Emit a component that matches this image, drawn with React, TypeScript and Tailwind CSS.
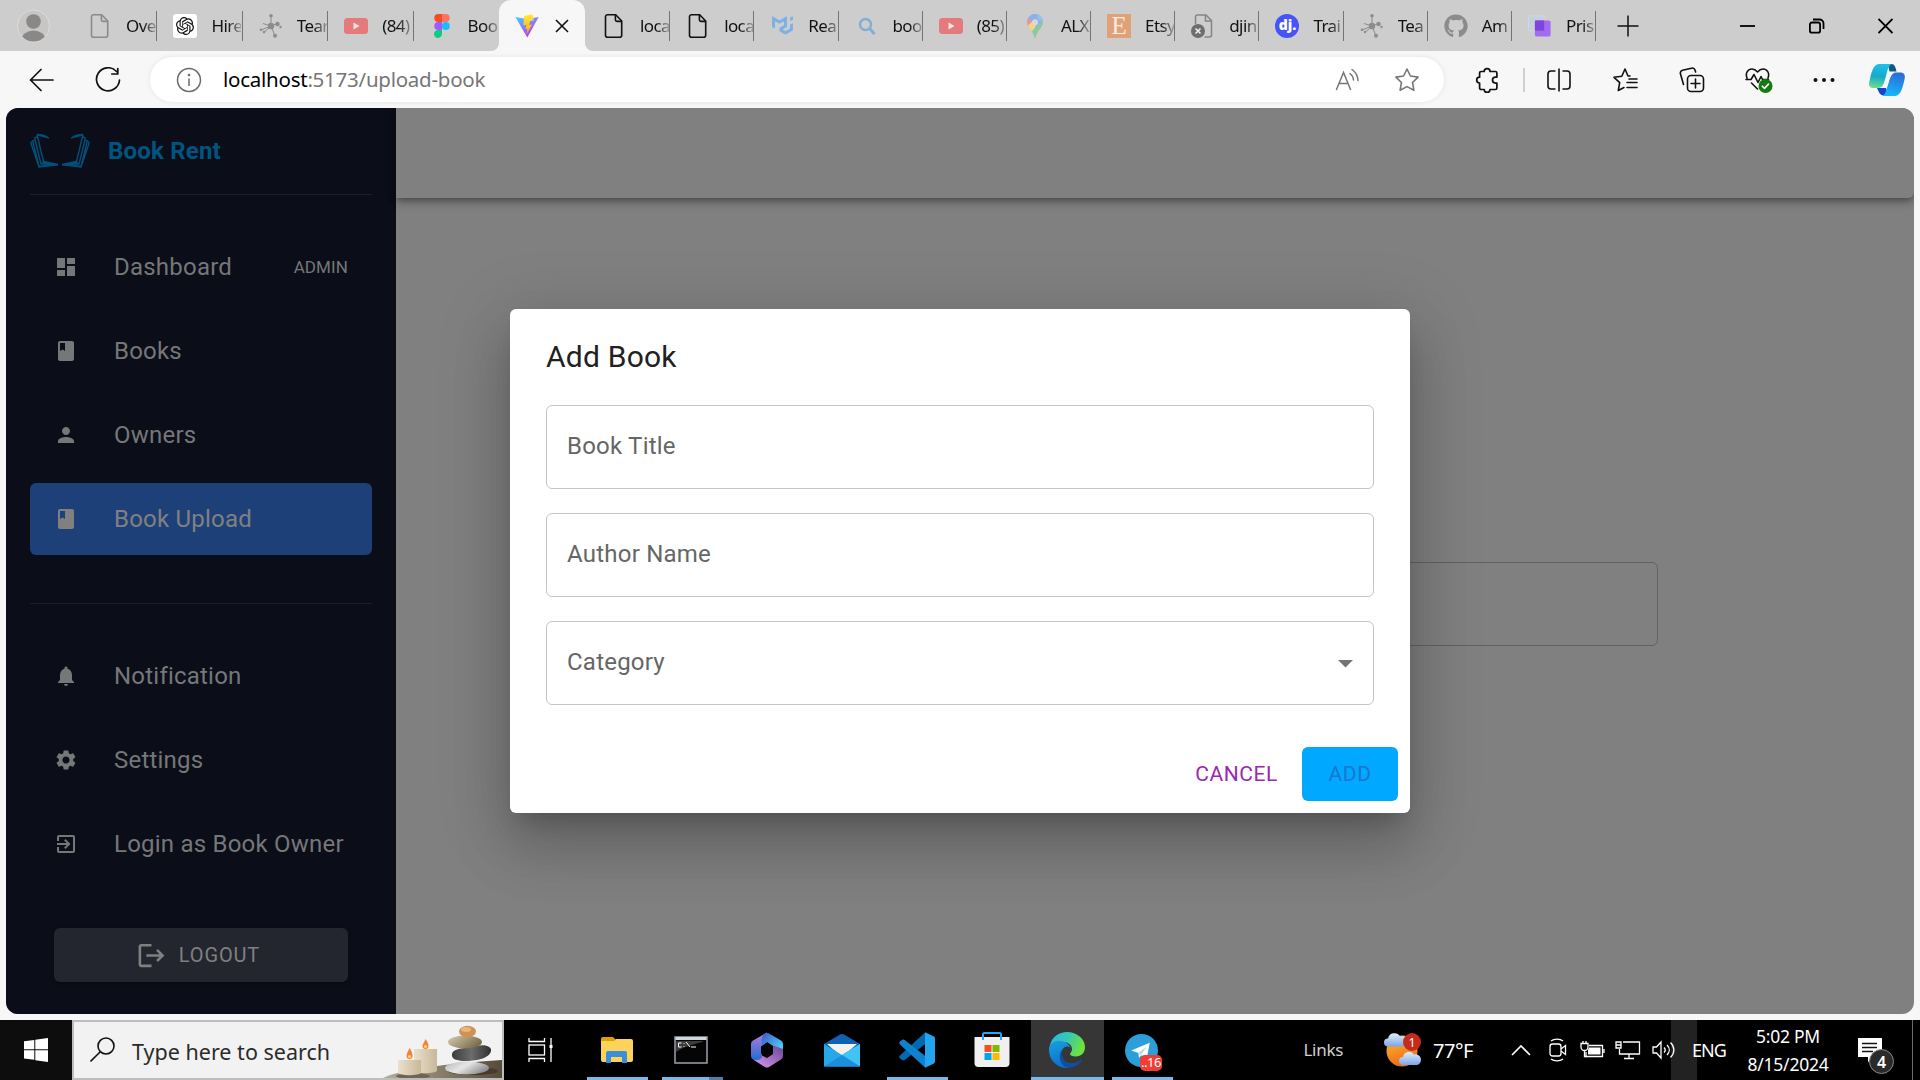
import React from "react";
import {
  MdDashboard,
  MdClass,
  MdPerson,
  MdNotifications,
  MdSettings,
  MdExitToApp,
  MdLogout,
} from "react-icons/md";
import { SiOpenai, SiMui } from "react-icons/si";
import { FaGithub } from "react-icons/fa";

/* ---------- tab icons ---------- */

const FileIcon = ({ color }: { color: string }) => (
  <svg width="24" height="24" viewBox="0 0 24 24" fill="none" stroke={color} strokeWidth="1.6" strokeLinejoin="round">
    <path d="M5.5 0.8h8.2l6 6.2v14.2a2 2 0 0 1-2 2H5.5a2 2 0 0 1-2-2V2.8a2 2 0 0 1 2-2z" />
    <path d="M13.4 0.8v5a1.6 1.6 0 0 0 1.6 1.6h4.7" />
  </svg>
);

const HubIcon = () => (
  <svg width="24" height="24" viewBox="0 0 24 24" stroke="#8c8c8c" fill="#8c8c8c">
    <path d="M12 12V2M12 12l6.500-2.500M12 12l4 10M12 12l-6 5.500M12 12l-10 4M12 12L4 9.500" strokeWidth="1" />
    <g stroke="none">
      <circle cx="12" cy="12" r="3.200" />
      <circle cx="12" cy="1.800" r="1.800" />
      <circle cx="18.500" cy="10" r="2.200" />
      <circle cx="21.500" cy="13" r="1.200" />
      <circle cx="16" cy="21.800" r="2" />
      <circle cx="5" cy="18" r="1.200" />
      <circle cx="2" cy="15.800" r="1.300" />
    </g>
  </svg>
);

const VideoIcon = () => (
  <svg width="24" height="24" viewBox="0 0 24 24">
    <rect x="0" y="4" width="24" height="16" rx="3.5" fill="#e47a7c" />
    <path d="M9.500 8.500v7l6-3.500z" fill="#f7e3e3" />
  </svg>
);

const FigmaIcon = () => (
  <svg width="24" height="24" viewBox="0 0 24 24">
    <path d="M8.300 0H12v8H8.300a4 4 0 0 1 0-8z" fill="#f24e1e" />
    <path d="M12 0h3.700a4 4 0 0 1 0 8H12z" fill="#ff7262" />
    <path d="M8.300 8H12v8H8.300a4 4 0 0 1 0-8z" fill="#a259ff" />
    <circle cx="15.800" cy="12" r="4" fill="#1abcfe" />
    <path d="M8.300 16H12v4a4 4 0 1 1-3.700-4z" fill="#0acf83" />
  </svg>
);

const ViteIcon = () => (
  <svg width="24" height="24" viewBox="0 0 24 24">
    <defs>
      <linearGradient id="vite-a" x1="0" y1="0" x2="0.6" y2="1">
        <stop offset="0" stopColor="#41d1ff" />
        <stop offset="1" stopColor="#bd34fe" />
      </linearGradient>
      <linearGradient id="vite-b" x1="0" y1="0" x2="0" y2="1">
        <stop offset="0" stopColor="#ffea3f" />
        <stop offset="1" stopColor="#ffa800" />
      </linearGradient>
    </defs>
    <path d="M0.300 3L12 5l11.700-2L12.300 23.500z" fill="url(#vite-a)" />
    <path d="M17.500 0.300L9 2l-.600 9.500 3-.700-.900 4.500 2-.600-1.200 6L17 10.500l-3 .600 1.200-4 3.600-.700z" fill="url(#vite-b)" />
  </svg>
);

const SearchFavicon = () => (
  <svg width="24" height="24" viewBox="0 0 24 24" fill="none" stroke="#82aed2" strokeWidth="2.4">
    <circle cx="10.500" cy="10.500" r="5.500" />
    <path d="M14.500 14.500l5 5.500" strokeWidth="3" />
  </svg>
);

const PinIcon = () => (
  <svg width="24" height="24" viewBox="0 0 24 24">
    <defs>
      <clipPath id="pin">
        <path d="M12 0a8 8 0 0 1 8 8.200c0 5.800-6.300 8.300-7.300 15a.7.700 0 0 1-1.400 0C10.300 16.500 4 14 4 8.200A8 8 0 0 1 12 0z" />
      </clipPath>
    </defs>
    <g clipPath="url(#pin)">
      <rect width="24" height="24" fill="#8dc8a0" />
      <path d="M2 0h20v4L12 14z" fill="#8bb0ea" />
      <path d="M2 2l8 6-8 10z" fill="#e79a93" />
      <path d="M2 14L10 7l3 5-6 8z" fill="#f3d583" />
      <path d="M14 0l8 3v4l-7-1z" fill="#9dbdf0" />
    </g>
    <circle cx="12" cy="8.200" r="3" fill="#d8d8d8" />
  </svg>
);

const EtsyIcon = () => (
  <span className="flex size-6 items-center justify-center bg-[#e0a177] font-['Liberation_Serif',serif] text-[25px] leading-none text-[#f1ebe6]">
    E
  </span>
);

const BrokenFileIcon = () => (
  <svg width="24" height="24" viewBox="0 0 24 24" fill="none">
    <path d="M4.500 10V3a2 2 0 0 1 2-2h8.500l5.500 5.500V21a2 2 0 0 1-2 2h-5" stroke="#858585" strokeWidth="1.500" />
    <path d="M14.500 1v6h6" stroke="#858585" strokeWidth="1.500" />
    <circle cx="7" cy="17" r="7" fill="#6e6e6e" />
    <path d="M4.500 14.500l5 5m0-5l-5 5" stroke="#eee" strokeWidth="1.600" />
  </svg>
);

const DjIcon = () => (
  <span className="flex size-6 items-center justify-center rounded-full bg-[#4553f8] pb-0.5 font-['Open_Sans',sans-serif] text-[14px] leading-none font-extrabold text-white">
    dj.
  </span>
);

const PrismIcon = () => (
  <svg width="26" height="24" viewBox="0 0 26 24">
    <rect x="0.500" y="1" width="17" height="16" rx="1" fill="#c6d0dc" stroke="#d9e0e8" strokeDasharray="1.500 1" />
    <rect x="7.500" y="6" width="17" height="17.500" rx="2" fill="#a26bf2" />
    <rect x="7.500" y="6" width="10" height="11" fill="#8044dc" />
  </svg>
);

const GptIcon = () => (
  <span className="flex size-6 items-center justify-center rounded-[3px] bg-white">
    <SiOpenai size={18} color="#111" />
  </span>
);

type TabInfo = { icon: React.ReactNode; text: string };

const leftTabs: TabInfo[] = [
  { icon: <FileIcon color="#8a8a8a" />, text: "Ove" },
  { icon: <GptIcon />, text: "Hire" },
  { icon: <HubIcon />, text: "Tear" },
  { icon: <VideoIcon />, text: "(84)" },
  { icon: <FigmaIcon />, text: "Boo" },
];

const rightTabs: TabInfo[] = [
  { icon: <FileIcon color="#111" />, text: "loca" },
  { icon: <FileIcon color="#111" />, text: "loca" },
  { icon: <SiMui size={21} color="#7db1e6" />, text: "Rea" },
  { icon: <SearchFavicon />, text: "boo" },
  { icon: <VideoIcon />, text: "(85)" },
  { icon: <PinIcon />, text: "ALX" },
  { icon: <EtsyIcon />, text: "Etsy" },
  { icon: <BrokenFileIcon />, text: "djin" },
  { icon: <DjIcon />, text: "Trai" },
  { icon: <HubIcon />, text: "Tea" },
  { icon: <FaGithub size={24} color="#8a8b8d" />, text: "Am" },
  { icon: <PrismIcon />, text: "Pris" },
];

const TabContent = ({ icon, text, separator }: TabInfo & { separator: boolean }) => (
  <>
    <span className="flex w-[24px] shrink-0 items-center justify-center">{icon}</span>
    <span className="ml-[14px] w-[30px] overflow-hidden text-[17px] tracking-[-0.6px] whitespace-nowrap text-[#111] [mask-image:linear-gradient(to_right,black_55%,rgba(0,0,0,0.25)_100%)]">
      {text}
    </span>
    {separator && <span className="ml-auto h-[30px] w-px shrink-0 bg-[#747474]" />}
  </>
);

const TabBar = () => (
  <div className="flex h-[51px] items-center bg-[#cdcdcd]">
    <div className="flex w-[72px] shrink-0 pl-[17px]">
      <svg width="33" height="34" viewBox="0 0 33 34">
        <defs>
          <clipPath id="avatar">
            <circle cx="16.500" cy="17" r="15.500" />
          </clipPath>
        </defs>
        <circle cx="16.500" cy="17" r="16" fill="#c8c6c4" stroke="#dedcda" />
        <g fill="#8a8886" clipPath="url(#avatar)">
          <circle cx="16.500" cy="12.500" r="7.300" />
          <ellipse cx="16.500" cy="31" rx="12" ry="9.500" />
        </g>
      </svg>
    </div>
    {leftTabs.map((t, i) => (
      <div key={i} className="flex h-full w-[85.4px] shrink-0 items-center pl-4">
        <TabContent {...t} separator={i < 4} />
      </div>
    ))}
    <div className="relative flex h-full w-[86px] shrink-0 items-center rounded-t-[12px] bg-[#f7f7f7] pl-4">
      <svg className="absolute bottom-0 -left-2" width="8" height="8" viewBox="0 0 8 8">
        <path d="M8 0v8H0a8 8 0 0 0 8-8z" fill="#f7f7f7" />
      </svg>
      <svg className="absolute -right-2 bottom-0" width="8" height="8" viewBox="0 0 8 8">
        <path d="M0 0v8h8a8 8 0 0 1-8-8z" fill="#f7f7f7" />
      </svg>
      <ViteIcon />
      <svg className="ml-4" width="14" height="14" viewBox="0 0 14 14" stroke="#111" strokeWidth="1.600">
        <path d="M1 1l12 12M13 1L1 13" />
      </svg>
    </div>
    <div className="ml-px flex h-full shrink-0">
      {rightTabs.map((t, i) => (
        <div key={i} className="flex h-full w-[84.2px] shrink-0 items-center pl-4">
          <TabContent {...t} separator />
        </div>
      ))}
    </div>
    <svg className="mr-[101px] ml-[21px] shrink-0" width="22" height="22" viewBox="0 0 22 22" stroke="#111" strokeWidth="1.500">
      <path d="M11 0.500v21M0.500 11h21" />
    </svg>
    <svg className="mr-[54px] shrink-0" width="15" height="16" viewBox="0 0 15 16" stroke="#000" strokeWidth="1.800">
      <path d="M0 8h15" />
    </svg>
    <svg className="mr-[53px] shrink-0" width="16" height="16" viewBox="0 0 16 16" fill="none" stroke="#000" strokeWidth="1.800">
      <rect x="0.900" y="4.500" width="10.200" height="10.200" rx="2" />
      <path d="M4 1.500h6.500a4 4 0 0 1 4 4V11" />
    </svg>
    <svg className="shrink-0" width="15" height="16" viewBox="0 0 15 16" stroke="#000" strokeWidth="1.800">
      <path d="M0.500 1l14 14M14.500 1L0.500 15" />
    </svg>
  </div>
);

/* ---------- address bar ---------- */

const Toolbar = () => (
  <div className="flex h-[57px] shrink-0 items-center bg-[#f7f7f7]">
    <svg className="ml-[29px] shrink-0" width="25" height="24" viewBox="0 0 25 24" fill="none" stroke="#111" strokeWidth="1.700" strokeLinecap="round" strokeLinejoin="round">
      <path d="M24 12H1.500M12 1.500L1.500 12 12 22.500" />
    </svg>
    <svg className="ml-[41px] shrink-0" width="26" height="26" viewBox="0 0 26 26" fill="none" stroke="#111" strokeWidth="1.700" strokeLinecap="round" strokeLinejoin="round">
      <path d="M21.500 4.500A11.500 11.500 0 1 0 24.500 13M22.800 1.500v5.500h-6" />
    </svg>
    <div className="ml-[29px] flex h-[45px] w-[1294px] shrink-0 items-center rounded-full bg-white pr-[24px] pl-[26px] shadow-[0_0_4px_1px_rgba(0,0,0,0.06)]">
      <svg width="26" height="26" viewBox="0 0 26 26" fill="none" stroke="#6b6b6b" strokeWidth="1.500">
        <circle cx="13" cy="13" r="11.500" />
        <path d="M13 11.500v7.500" />
        <circle cx="13" cy="8" r="0.600" fill="#6b6b6b" />
      </svg>
      <span className="ml-[21px] text-[20.500px] tracking-[-0.250px] whitespace-nowrap text-[#767676]">
        <span className="text-black">localhost</span>:5173/upload-book
      </span>
      <svg className="ml-auto" width="25" height="24" viewBox="0 0 25 24" fill="none" stroke="#767676" strokeWidth="1.500" strokeLinecap="round">
        <path d="M1.500 21.500L8.500 4.500l7 17M4 15.500h9M15 5.500a9 9 0 0 1 3.500 6.500M17 1.500a14 14 0 0 1 6 11" />
      </svg>
      <svg className="ml-[34px]" width="26" height="26" viewBox="0 0 26 26" fill="none" stroke="#767676" strokeWidth="1.600" strokeLinejoin="round">
        <path d="M13 2l3.400 7 7.700 1.100-5.600 5.400 1.400 7.700L13 19.600l-6.900 3.600 1.400-7.700-5.600-5.400L9.600 9z" />
      </svg>
    </div>
    <svg className="ml-[31px] shrink-0" width="24" height="26" viewBox="0 0 24 26" fill="none" stroke="#111" strokeWidth="1.700" strokeLinejoin="round">
      <path d="M9.200 4.500a2.900 2.900 0 0 1 5.800 0h5.300a1.600 1.600 0 0 1 1.600 1.600v4h-1.400a3 3 0 0 0 0 6h1.400v4.800a1.600 1.600 0 0 1-1.600 1.600H15a2.900 2.900 0 0 1-5.800 0h-3a1.600 1.600 0 0 1-1.600-1.600v-4.900a2.900 2.900 0 0 1 0-5.800V6.100a1.600 1.600 0 0 1 1.600-1.600z" />
    </svg>
    <span className="ml-[24px] h-6 w-[2px] shrink-0 bg-[#d0d0d0]" />
    <svg className="ml-[22px] shrink-0" width="24" height="24" viewBox="0 0 24 24" fill="none" stroke="#111" strokeWidth="1.600">
      <path d="M8.500 3H4a3 3 0 0 0-3 3v12a3 3 0 0 0 3 3h4.500M15.500 3H20a3 3 0 0 1 3 3v12a3 3 0 0 1-3 3h-4.500M12 0.500v23" />
    </svg>
    <svg className="ml-[41px] shrink-0" width="26" height="26" viewBox="0 0 26 26" fill="none" stroke="#111" strokeWidth="1.600" strokeLinejoin="round" strokeLinecap="round">
      <path d="M16 9l-3-7-3.200 7.200L2 10.300l5.700 5.400L6.300 23.500 12 20.500M17 12h8M16 9h2M15 15.500h10M15 20.500h10" />
    </svg>
    <svg className="ml-[41px] shrink-0" width="26" height="26" viewBox="0 0 26 26" fill="none" stroke="#111" strokeWidth="1.600" strokeLinecap="round">
      <rect x="8.500" y="8.500" width="16" height="16" rx="3.500" />
      <path d="M16.500 12v9M12 16.500h9M4.500 17.500L1.500 7a3 3 0 0 1 2-3.700L12.500 1.200a3 3 0 0 1 3.600 2l.500 1.800" />
    </svg>
    <svg className="ml-[40px] shrink-0" width="28" height="28" viewBox="0 0 28 28" fill="none" stroke="#111" strokeWidth="1.600" strokeLinecap="round" strokeLinejoin="round">
      <path d="M2 12C0 7 3 3 7 3c2.500 0 4.200 1.500 5.500 3C13.800 4.500 15.500 3 18 3c4 0 7 4 5 9M1 13.500h5l3-5 4 8 3-6 1.500 3h6M6.500 17l6 6" />
      <circle cx="20.500" cy="20" r="7" fill="#107c10" stroke="none" />
      <path d="M17.300 20.200l2.200 2.200 4-4.300" stroke="#fff" />
    </svg>
    <svg className="ml-[40px] shrink-0" width="22" height="6" viewBox="0 0 22 6" fill="#111">
      <circle cx="2.500" cy="3" r="2" />
      <circle cx="11" cy="3" r="2" />
      <circle cx="19.500" cy="3" r="2" />
    </svg>
    <svg className="ml-[34px] shrink-0" width="36" height="34" viewBox="0 0 36 34">
      <defs>
        <linearGradient id="cp-a" x1="0.300" y1="0" x2="0.200" y2="1">
          <stop offset="0" stopColor="#1fc0ea" />
          <stop offset="0.500" stopColor="#17a9c9" />
          <stop offset="1" stopColor="#6be08c" />
        </linearGradient>
        <linearGradient id="cp-b" x1="0.700" y1="0" x2="0.500" y2="1">
          <stop offset="0" stopColor="#2a6ad4" />
          <stop offset="1" stopColor="#17b6fb" />
        </linearGradient>
      </defs>
      <path d="M19 1h3.500c3 0 4 3 5 7.500h-7z" fill="#0d5a86" />
      <path d="M8 25h9l2 7.500h-4c-4 0-5-3-7-7.500z" fill="#1744cf" />
      <path d="M10 1h13c-3.500 1-4.500 6-6 12-2 7.500-3 12-8 12H4c-4 0-4.500-3-3.500-7C2 11 4 1 10 1z" fill="url(#cp-a)" />
      <path d="M26 33H13c3.500-1 4.500-6 6-12 2-7.500 3-11.500 8-11.500h4.500c4 0 5 3 4 7C34 23 32 33 26 33z" fill="url(#cp-b)" />
      <path d="M22 10h3c-3 1.500-4 5-5.500 10-1 3.500-2 5-4 5h-3c2.500-1.500 4-5 5.200-9.500C18.700 12 19.500 10 22 10z" fill="#f4fbff" />
    </svg>
  </div>
);

/* ---------- application page ---------- */

const BookHalf = () => (
  <>
    <path d="M7 1.500l6.500 27 14.500 3M7 1.500l12 3.500M7 1.500c3 0 7 .500 11 3M4.500 5l6.500 26 9-.500M4.500 5l2.500-1M2.500 7.500L9 33.500l11-1.500M0.700 9.500L9 34l12-1.500 7-.800-8-1.200M0.700 9.500L4 7" />
    <path d="M13 28l15 4-16-1z" fill="#00517a" strokeWidth="0.500" />
  </>
);

const BookLogo = () => (
  <svg width="60" height="36" viewBox="0 0 60 36" fill="none" stroke="#00517a" strokeWidth="1.400">
    <BookHalf />
    <g transform="translate(60 0) scale(-1 1)">
      <BookHalf />
    </g>
  </svg>
);

type NavProps = { icon: React.ReactNode; label: string; active?: boolean; tag?: string };

const NavItem = ({ icon, label, active, tag }: NavProps) => (
  <div
    className={
      active
        ? "flex h-[72px] items-center rounded-[6px] bg-[#1e4079] px-6 text-[#808080]"
        : "flex h-[72px] items-center rounded-[6px] px-6 text-[#757779]"
    }
  >
    {icon}
    <span className="ml-9 text-[24px] tracking-[0.220px] whitespace-nowrap">{label}</span>
    {tag && <span className="ml-auto pt-px text-[17px] tracking-[0.100px]">{tag}</span>}
  </div>
);

const Sidebar = () => (
  <aside className="flex w-[390px] shrink-0 flex-col bg-[#0b0d18] px-6">
    <div className="flex h-[87px] shrink-0 items-center border-b border-[#1c1e29] pb-px">
      <BookLogo />
      <span className="ml-[18px] text-[24px] font-bold tracking-[0.200px] text-[#005580]">Book Rent</span>
    </div>
    <nav className="mt-9 flex flex-col gap-3">
      <NavItem icon={<MdDashboard size={24} />} label="Dashboard" tag="ADMIN" />
      <NavItem icon={<MdClass size={24} />} label="Books" />
      <NavItem icon={<MdPerson size={24} />} label="Owners" />
      <NavItem icon={<MdClass size={24} />} label="Book Upload" active />
    </nav>
    <div className="mt-12 h-px shrink-0 bg-[#1c1e29]" />
    <nav className="mt-9 flex flex-col gap-3">
      <NavItem icon={<MdNotifications size={24} />} label="Notification" />
      <NavItem icon={<MdSettings size={24} />} label="Settings" />
      <NavItem icon={<MdExitToApp size={24} />} label="Login as Book Owner" />
    </nav>
    <div className="mx-6 mt-12 flex h-[54px] items-center justify-center rounded-[6px] bg-[#23252f] pr-[6px] text-[#808080] shadow-[0_2px_4px_rgba(0,0,0,0.3)]">
      <MdLogout size={31} />
      <span className="ml-[12px] text-[20px] tracking-[0.850px]">LOGOUT</span>
    </div>
  </aside>
);

const Field = ({ label, select }: { label: string; select?: boolean }) => (
  <div className="flex h-[84px] items-center justify-between rounded-[6px] border border-[#c4c4c4] pr-5 pb-[3px] pl-5">
    <span className="text-[24px] tracking-[0.225px] text-[#666]">{label}</span>
    {select && (
      <svg className="mt-[4px]" width="15" height="8" viewBox="0 0 15 8">
        <path d="M0 0h15L7.500 7.500z" fill="#757575" />
      </svg>
    )}
  </div>
);

const AddBookDialog = () => (
  <div className="h-[504px] w-[900px] rounded-[6px] bg-white px-9 pt-6 shadow-[0_16px_22px_-10px_rgba(0,0,0,0.2),0_36px_57px_4px_rgba(0,0,0,0.14),0_14px_69px_12px_rgba(0,0,0,0.12)]">
    <h2 className="text-[30px] leading-[48px] tracking-[0.225px] text-[#212121]">Add Book</h2>
    <div className="mt-6 flex flex-col gap-6">
      <Field label="Book Title" />
      <Field label="Author Name" />
      <Field label="Category" select />
    </div>
    <div className="-mr-6 mt-[42px] flex h-[54px] items-center justify-end text-[21px] tracking-[0.600px]">
      <button className="px-6 pt-[2px] text-[#9c27b0]">CANCEL</button>
      <button className="h-[54px] w-24 rounded-[6px] bg-[#00a8ff] pt-[2px] text-[#1976d2]">ADD</button>
    </div>
  </div>
);

const AppPage = () => (
  <div className="relative mx-[6px] flex h-[906px] overflow-hidden rounded-[12px] bg-[#808080] font-[Roboto,sans-serif]">
    <Sidebar />
    <main className="flex grow flex-col items-center">
      <header className="h-[90px] w-full shrink-0 rounded-br-[6px] bg-[#808080] shadow-[0_3px_6px_-1px_rgba(0,0,0,0.35),0_6px_8px_0_rgba(0,0,0,0.1),0_2px_15px_0_rgba(0,0,0,0.08)]" />
      <div className="mt-[364px] h-[84px] w-[1006px] rounded-[6px] border border-[#626262]" />
    </main>
    <div className="absolute inset-0 flex items-center justify-center">
      <AddBookDialog />
    </div>
  </div>
);

/* ---------- taskbar ---------- */

const CandleArt = () => (
  <svg className="ml-auto shrink-0" width="119" height="56" viewBox="0 0 119 56">
    <defs>
      <linearGradient id="ca" x1="0" x2="1">
        <stop offset="0" stopColor="#e9e0ce" />
        <stop offset="1" stopColor="#c9b898" />
      </linearGradient>
      <linearGradient id="st1" x1="0" x2="1" y2="0.500">
        <stop offset="0" stopColor="#d8cdb0" />
        <stop offset="1" stopColor="#7c6c4d" />
      </linearGradient>
      <linearGradient id="st2" x1="0" x2="1">
        <stop offset="0" stopColor="#3c3c3c" />
        <stop offset="0.500" stopColor="#6c6c6c" />
        <stop offset="1" stopColor="#303030" />
      </linearGradient>
      <linearGradient id="st3" x1="0" x2="1" y2="0.500">
        <stop offset="0" stopColor="#b5b5b5" />
        <stop offset="0.500" stopColor="#e6e6e6" />
        <stop offset="1" stopColor="#909090" />
      </linearGradient>
      <linearGradient id="tb" x1="0" x2="1">
        <stop offset="0" stopColor="#b5b09a" />
        <stop offset="1" stopColor="#564a38" />
      </linearGradient>
    </defs>
    <path d="M0 56C15 48 60 42 119 38v18z" fill="url(#tb)" />
    <ellipse cx="30" cy="54" rx="17" ry="3" fill="#6d6655" />
    <ellipse cx="90" cy="49" rx="25" ry="4" fill="#453a2b" />
    <path d="M31 27h23v22a12 3 0 0 1-23 0z" fill="url(#ca)" />
    <path d="M15 38h23v13a12 3 0 0 1-23 0z" fill="url(#ca)" />
    <path d="M42.500 17c2 3 3 5 3 7a3 3 0 0 1-6 0c0-2 2-4 3-7z" fill="#f3803c" />
    <circle cx="42.500" cy="24.500" r="1.600" fill="#ffd95a" />
    <path d="M26.500 26c2 3 3 5 3 8a3 3 0 0 1-6 0c0-3 2-5 3-8z" fill="#f3803c" />
    <circle cx="26.500" cy="34.500" r="1.600" fill="#ffd95a" />
    <ellipse cx="84" cy="46" rx="22" ry="6.500" fill="url(#st3)" />
    <path d="M69 32c2-7 14-5 24-8 10-2 16 1 15 5-2 8-16 10-26 10-8 0-14-2-13-7z" fill="url(#st2)" />
    <ellipse cx="82" cy="20" rx="17" ry="6.500" fill="url(#st1)" />
    <ellipse cx="84.500" cy="9.500" rx="8.500" ry="5.700" fill="#cd9254" />
    <ellipse cx="83" cy="7.500" rx="5" ry="2.500" fill="#e6b67d" />
  </svg>
);

const ExplorerIcon = () => (
  <svg width="32" height="28" viewBox="0 0 32 28">
    <path d="M0 3a2 2 0 0 1 2-2h10l3 3v5H0z" fill="#e0a000" />
    <path d="M0 5h13l2-2h15a2 2 0 0 1 2 2v19a2 2 0 0 1-2 2H2a2 2 0 0 1-2-2z" fill="#ffd25c" />
    <path d="M5 27V17a2 2 0 0 1 2-2h17a2 2 0 0 1 2 2v10h-5v-6H10v6z" fill="#3a8fdb" />
  </svg>
);

const TerminalIcon = () => (
  <svg width="34" height="28" viewBox="0 0 34 28">
    <rect x="1" y="1" width="32" height="26" fill="#050505" stroke="#9aa3ab" strokeWidth="1.500" />
    <rect x="1.500" y="1" width="31" height="3" fill="#cfd6dc" />
    <path d="M2 16C10 10 20 9 30 5H2z" fill="#3c3c3c" />
    <path d="M7.500 7H4.500v4h3M10 7v.800M10 10v.800M12 6l4 5M17 11h5" stroke="#fff" strokeWidth="1" fill="none" />
  </svg>
);

const OfficeIcon = () => (
  <svg width="34" height="36" viewBox="0 0 34 36">
    <defs>
      <linearGradient id="of1" x1="0" y1="0" x2="0" y2="1">
        <stop offset="0" stopColor="#b77de0" />
        <stop offset="1" stopColor="#1f6cd0" />
      </linearGradient>
      <linearGradient id="of2" x1="0" x2="1" y2="0.800">
        <stop offset="0" stopColor="#3a5bc8" />
        <stop offset="1" stopColor="#4fd6ff" />
      </linearGradient>
      <linearGradient id="of3" x1="0" x2="1" y1="1" y2="0">
        <stop offset="0" stopColor="#e09cf8" />
        <stop offset="1" stopColor="#67458f" />
      </linearGradient>
    </defs>
    <path d="M17 0.500L3 8.500a4 4 0 0 0-2 3.500v12a4 4 0 0 0 2 3.500c4 2 9 1 9-4V14l5-4z" fill="url(#of1)" />
    <path d="M15 1.500a4 4 0 0 1 4 0l12 7a4 4 0 0 1 2 3.500v11l-10-6v-3l-6-4-5 3c-1-5 0-10 3-11.500z" fill="url(#of2)" />
    <path d="M33 17v7a4 4 0 0 1-2 3.500l-12 7.500a4 4 0 0 1-4 0L3 27.500c4 1.500 9 0 9-4l5 2.500 6-4v-8.500z" fill="url(#of3)" />
    <path d="M17 11l6 3.500v7L17 25l-6-3.500v-7z" fill="#050505" />
  </svg>
);

const MailIcon = () => (
  <svg width="36" height="34" viewBox="0 0 36 34">
    <path d="M0 11L16 1.500a4 4 0 0 1 4 0L36 11v6H0z" fill="#0f5fb5" />
    <path d="M3 11h30L18 24z" fill="#f1f1f1" />
    <path d="M0 11l18 11L36 11v22.500H0z" fill="#28a8ea" />
    <path d="M36 11v22.500L18 22z" fill="#40c4f5" />
    <path d="M0 33.500L18 22l18 11.500z" fill="#1b8fdd" />
  </svg>
);

const CodeIcon = () => (
  <svg width="36" height="36" viewBox="0 0 36 36">
    <path d="M26 0.500L1 23.500c-1 1-1 2 0 3l2 1.500c1 .700 2 .600 2.700 0L30 9z" fill="#0069b2" />
    <path d="M26 35.500L1 12.500c-1-1-1-2 0-3L3 8c1-.700 2-.600 2.700 0L30 27z" fill="#0f82cf" />
    <path d="M26 0.300l8.500 4A2.500 2.500 0 0 1 36 6.500v23a2.500 2.500 0 0 1-1.500 2.200l-8.500 4z" fill="#24a3ee" />
  </svg>
);

const StoreIcon = () => (
  <svg width="36" height="36" viewBox="0 0 36 36">
    <path d="M9 7V2.500A1.500 1.500 0 0 1 10.500 1h15A1.500 1.500 0 0 1 27 2.500V7" fill="none" stroke="#2aa6ea" strokeWidth="2" />
    <path d="M0.500 5h35v26a4 4 0 0 1-4 4h-27a4 4 0 0 1-4-4z" fill="#f0f0f0" />
    <path d="M10.500 13h7v7h-7z" fill="#f25022" />
    <path d="M18.500 13h7v7h-7z" fill="#7fba00" />
    <path d="M10.500 21h7v7h-7z" fill="#00a4ef" />
    <path d="M18.500 21h7v7h-7z" fill="#ffb900" />
    <path d="M9 5v3M27 5v3" stroke="#2aa6ea" strokeWidth="2" />
  </svg>
);

const EdgeIcon = () => (
  <svg width="36" height="36" viewBox="0 0 36 36">
    <defs>
      <linearGradient id="eg1" x1="0" x2="1" y2="0.300">
        <stop offset="0" stopColor="#2bb5e8" />
        <stop offset="0.500" stopColor="#33c6b8" />
        <stop offset="1" stopColor="#6be33e" />
      </linearGradient>
      <linearGradient id="eg2" x1="0" y1="0" x2="0.300" y2="1">
        <stop offset="0" stopColor="#1aa0e0" />
        <stop offset="1" stopColor="#0b70cf" />
      </linearGradient>
    </defs>
    <path d="M1 13C3 5 10 0 18 0c10 0 18 7 18 15 0 6-4 9.500-9 9.500-4 0-6-1-6-2.500 0-1 2-2 2-5 0-4-4-7-9-7C8 10 3 12 0.500 17z" fill="url(#eg1)" />
    <path d="M0 18c0-6 5-10 12-9 5 .500 9 4 10 8-2-4-8-3-9.500 3-1.500 8 4 13 8.500 16C9 37 0 29 0 18z" fill="url(#eg2)" />
    <path d="M14 17c-3 6 0 14 9 14 4 0 7-1.500 9-3.500.800-.700 1.500 0 1 .700C30 33 24 36 19 36 11 34 8 22 14 17z" fill="#114e9c" />
  </svg>
);

const TelegramIcon = () => (
  <div className="relative">
    <svg width="33" height="33" viewBox="0 0 32 32">
      <circle cx="16" cy="16" r="16" fill="#2a9fda" />
      <path d="M6 16l18-7.500-3 16-5-4-2.500 2.500-.500-4.500z" fill="#fff" />
      <path d="M13 18.500L21 12l-5.500 8.500z" fill="#b9d8ea" />
    </svg>
    <span className="absolute top-[21px] left-[15px] flex h-4 w-[22px] items-center justify-center rounded-[5px] bg-[#f23c34] text-[13px] tracking-[-0.400px] text-white">
      ..16
    </span>
  </div>
);

const TaskButton = ({ icon, running, active, stacked }: { icon: React.ReactNode; running?: boolean; active?: boolean; stacked?: boolean }) => (
  <div
    className={
      active
        ? "relative mx-px flex h-full w-[73px] items-center justify-center bg-[#363636] pr-[2px]"
        : stacked
          ? "relative flex h-full w-[75px] items-center justify-center pr-[3px]"
          : "relative flex h-full w-[75px] items-center justify-center pr-[2px]"
    }
  >
    {icon}
    {running && (
      <span
        className={
          active
            ? "absolute bottom-0 left-0 h-[3px] w-full bg-[#76b9ed]"
            : stacked
              ? "absolute bottom-0 left-[7px] h-[3px] w-[61px] border-r-[14px] border-[#4e7fa5] bg-[#76b9ed]"
              : "absolute bottom-0 left-[7px] h-[3px] w-[61px] bg-[#76b9ed]"
        }
      />
    )}
  </div>
);

const WeatherIcon = () => (
  <svg width="37" height="36" viewBox="0 0 37 36">
    <defs>
      <linearGradient id="sun" x1="0" y1="0" x2="0.300" y2="1">
        <stop offset="0" stopColor="#fbc02d" />
        <stop offset="1" stopColor="#ef6c1a" />
      </linearGradient>
      <linearGradient id="cloud" x1="0" y1="0" x2="0" y2="1">
        <stop offset="0" stopColor="#e3eefc" />
        <stop offset="1" stopColor="#7ba6e8" />
      </linearGradient>
    </defs>
    <circle cx="18" cy="19" r="15.500" fill="url(#sun)" />
    <path d="M4 14.500a4 4 0 0 1 0-8 6.500 6.500 0 0 1 12-2 5 5 0 0 1 5 10z" fill="url(#cloud)" />
    <path d="M19 33a4 4 0 0 1 0-8 6 6 0 0 1 11-2.500 5 5 0 0 1 3 10.500z" fill="url(#cloud)" />
    <circle cx="28" cy="10" r="9" fill="#c42b1c" />
    <text x="28" y="14.500" textAnchor="middle" fontSize="12.500" fill="#fff" fontFamily="Noto Sans">1</text>
  </svg>
);

const Tray = () => (
  <div className="ml-auto flex h-full items-center text-white">
    <span className="w-[80.5px] text-[17px] tracking-[-0.300px] text-[#d0d0d0]">Links</span>
    <WeatherIcon />
    <span className="ml-[12px] w-[78px] pt-[2px] text-[20px] tracking-[-0.500px]">77°F</span>
    <svg width="20" height="12" viewBox="0 0 20 12" fill="none" stroke="#fff" strokeWidth="1.600">
      <path d="M1 11l9-9 9 9" />
    </svg>
    <svg className="ml-[17px]" width="20" height="24" viewBox="0 0 20 24" fill="none" stroke="#fff" strokeWidth="1.300">
      <rect x="2" y="6" width="11" height="12" rx="2.500" />
      <path d="M13 11l4.500-3.500v9L13 13M3 3c3-2.500 9-2.500 12 0M3 21c3 2.500 9 2.500 12 0" />
    </svg>
    <svg className="ml-[12px]" width="25" height="20" viewBox="0 0 25 20" fill="none" stroke="#fff" strokeWidth="1.300">
      <path d="M9 5.500h13.500v11H6V12M24 9v4" />
      <path d="M9 7.500h11.500v7H8V10z" fill="#fff" stroke="none" />
      <path d="M1 3.500h7V7a3.500 3.500 0 0 1-7 0zM3 3.500V1M6 3.500V1M4.500 10v6.500H7" />
    </svg>
    <svg className="ml-[10px]" width="26" height="20" viewBox="0 0 26 20" fill="none" stroke="#fff" strokeWidth="1.300">
      <path d="M8 2h16.500v12H4.500V9M14 14v4M9 18.500h10M1 2h5v6H1zM1 5h5" />
    </svg>
    <svg className="relative z-10 ml-[11px]" width="24" height="20" viewBox="0 0 24 20" fill="none" stroke="#fff" strokeWidth="1.300">
      <path d="M1 7h3.500L9 2v16l-4.500-5H1zM12 7.500c1.500 1.500 1.500 3.500 0 5M15 5c3 3 3 7 0 10M18.500 2.500c4.500 4.500 4.500 10.500 0 15" />
    </svg>
    <span className="-ml-[5px] h-full w-[26px] bg-[#222]" />
    <span className="-ml-[5px] w-[44px] text-[18px] tracking-[-1px]">ENG</span>
    <div className="flex w-[104px] flex-col items-center text-[17.500px] leading-[28px] tracking-[-0.250px]">
      <span>5:02 PM</span>
      <span>8/15/2024</span>
    </div>
    <div className="relative ml-[18px] w-[54px]">
      <svg width="25" height="26" viewBox="0 0 25 26">
        <path d="M0 1h24v19H14l-4 5.500V20H0z" fill="#fff" />
        <path d="M4 6.500h15M4 10.500h15M4 14.500h11" stroke="#111" strokeWidth="1.300" />
      </svg>
      <span className="absolute top-[12px] left-[11px] flex size-[25px] items-center justify-center rounded-full border border-[#888] bg-[#2a2a2a] text-[16px] font-semibold">
        4
      </span>
    </div>
    <span className="mr-[7px] h-full w-px bg-[#6a6a6a]" />
  </div>
);

const Taskbar = () => (
  <div className="flex h-[60px] shrink-0 items-center bg-black">
    <div className="flex h-full w-[72px] shrink-0 items-center justify-center bg-[#0d0d0d]">
      <svg width="24" height="24" viewBox="0 0 24 24" fill="#fff">
        <path d="M0 3.300L10.300 2v9.300H0zM11.300 1.800L24 0v11.300H11.300zM0 12.300h10.300v9.500L0 20.500zM11.300 12.300H24V24l-12.700-1.800z" />
      </svg>
    </div>
    <div className="flex h-full w-[432px] shrink-0 items-center border-2 border-[#bdbdbd] bg-[#f2f2f2] pl-4">
      <svg className="shrink-0" width="26" height="26" viewBox="0 0 26 26" fill="none" stroke="#111" strokeWidth="1.600">
        <circle cx="16" cy="9" r="8" />
        <path d="M10.300 14.700L0.500 24.500" />
      </svg>
      <span className="ml-[16px] pt-[5px] text-[21.500px] tracking-[0.010px] whitespace-nowrap text-[#2b2b2b]">
        Type here to search
      </span>
      <CandleArt />
    </div>
    <div className="flex h-full w-[76px] shrink-0 items-center justify-center pr-[3px]">
      <svg width="26" height="24" viewBox="0 0 26 24" fill="none" stroke="#fff" strokeWidth="1.300">
        <rect x="1" y="7" width="15.500" height="10" />
        <path d="M1 0v3.500h15.500V0M1 24v-3.500h15.500V24M23 0v24" />
        <rect x="21.500" y="7" width="3" height="3" fill="#fff" stroke="none" />
      </svg>
    </div>
    <TaskButton icon={<ExplorerIcon />} running />
    <TaskButton icon={<TerminalIcon />} running stacked />
    <TaskButton icon={<OfficeIcon />} />
    <TaskButton icon={<MailIcon />} />
    <TaskButton icon={<CodeIcon />} running />
    <TaskButton icon={<StoreIcon />} />
    <TaskButton icon={<EdgeIcon />} running active />
    <TaskButton icon={<TelegramIcon />} running />
    <Tray />
  </div>
);

export default function App() {
  return (
    <div className="flex h-[1080px] w-[1920px] flex-col overflow-hidden bg-[#f7f7f7] font-['Noto_Sans',sans-serif]">
      <TabBar />
      <Toolbar />
      <AppPage />
      <div className="h-[6px] shrink-0" />
      <Taskbar />
    </div>
  );
}
